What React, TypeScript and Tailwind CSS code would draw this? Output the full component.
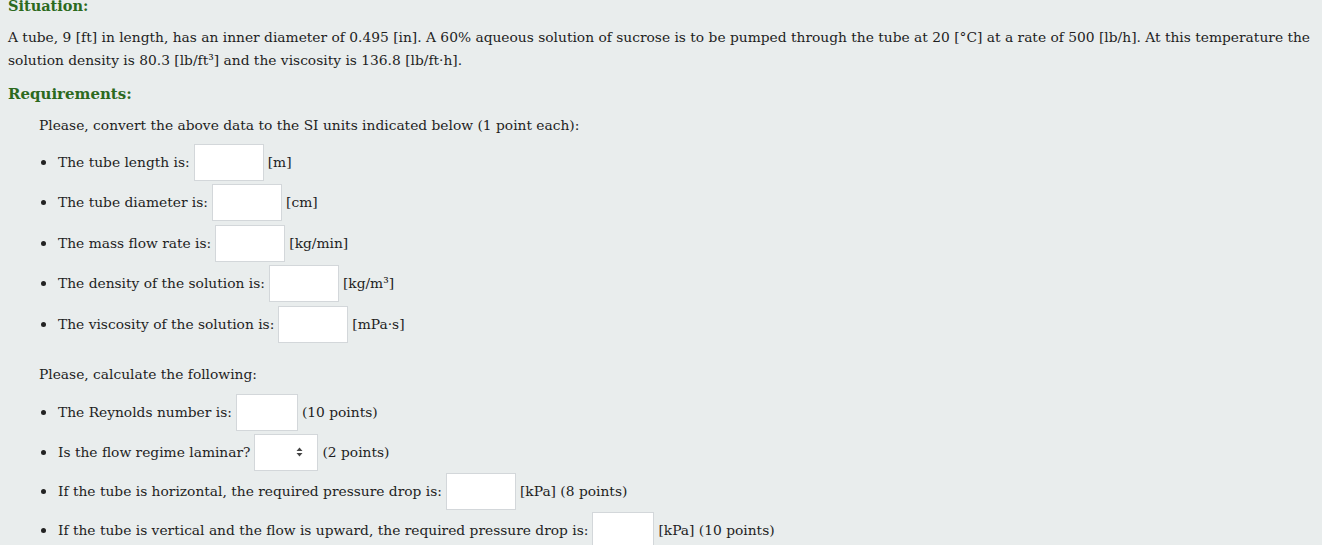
import React from 'react'

const font = { fontFamily: '"DejaVu Serif", Georgia, serif' }

type Row = { label: string; unit: string; w: string; select?: boolean; h: string }

const convertRows: Row[] = [
  { label: 'The tube length is:', unit: '[m]', w: 'w-[70px]', h: 'h-[40.5px]' },
  { label: 'The tube diameter is:', unit: '[cm]', w: 'w-[70px]', h: 'h-[40.5px]' },
  { label: 'The mass flow rate is:', unit: '[kg/min]', w: 'w-[70px]', h: 'h-[40.5px]' },
  { label: 'The density of the solution is:', unit: '[kg/m³]', w: 'w-[70px]', h: 'h-[40.5px]' },
  { label: 'The viscosity of the solution is:', unit: '[mPa·s]', w: 'w-[70px]', h: 'h-[40.5px]' },
]

const calcRows: Row[] = [
  { label: 'The Reynolds number is:', unit: '(10 points)', w: 'w-[62px]', h: 'h-[40px]' },
  { label: 'Is the flow regime laminar?', unit: '(2 points)', w: 'w-[64px]', select: true, h: 'h-[39px]' },
  { label: 'If the tube is horizontal, the required pressure drop is:', unit: '[kPa] (8 points)', w: 'w-[70px]', h: 'h-[39px]' },
  { label: 'If the tube is vertical and the flow is upward, the required pressure drop is:', unit: '[kPa] (10 points)', w: 'w-[62px]', h: 'h-[40px]' },
]

function Field({ row }: { row: Row }) {
  return (
    <li className={`flex items-center ${row.h}`}>
      <span className="w-[5px] h-[5px] rounded-full bg-[#222] ml-[2px] mr-[12px]" />
      <span>{row.label}</span>
      {row.select ? (
        <span className={`${row.w} h-[37px] mx-[4px] bg-white border border-[#d3d7da] flex items-center justify-end pr-[14px]`}>
          <svg width="7" height="10" viewBox="0 0 7 10">
            <path d="M3.5 0.5 L6.5 4 L0.5 4 Z M3.5 9.5 L6.5 6 L0.5 6 Z" fill="#444" />
          </svg>
        </span>
      ) : (
        <span className={`${row.w} h-[37px] mx-[4px] bg-white border border-[#d3d7da]`} />
      )}
      <span>{row.unit}</span>
    </li>
  )
}

export default function App() {
  return (
    <div className="w-[1322px] h-[545px] overflow-hidden bg-[#e9eded] text-[#1e1e1e] text-[13.8px]" style={font}>
      <div className="pl-[8px] pr-[4px] -mt-[5px]">
        {/* Situation */}
        <h3 className="text-[14.5px] font-bold text-[#2c6a1e] leading-[22px]">Situation:</h3>
        <p className="mt-[9px] leading-[23px]">
          A tube, 9 [ft] in length, has an inner diameter of 0.495 [in]. A 60% aqueous solution of sucrose is to be pumped
          through the tube at 20 [°C] at a rate of 500 [lb/h]. At this temperature the solution density is 80.3 [lb/ft³]
          and the viscosity is 136.8 [lb/ft·h].
        </p>

        {/* Requirements */}
        <h3 className="mt-[11px] text-[15px] font-bold text-[#2c6a1e] leading-[22px]">Requirements:</h3>

        <div className="pl-[31px]">
          <p className="mt-[9px] leading-[22px]">Please, convert the above data to the SI units indicated below (1 point each):</p>
          <ul className="mt-[6px]">
            {convertRows.map(r => (
              <Field key={r.label} row={r} />
            ))}
          </ul>

          <p className="mt-[18px] leading-[22px]">Please, calculate the following:</p>
          <ul className="mt-[8px]">
            {calcRows.map(r => (
              <Field key={r.label} row={r} />
            ))}
          </ul>
        </div>
      </div>
    </div>
  )
}
